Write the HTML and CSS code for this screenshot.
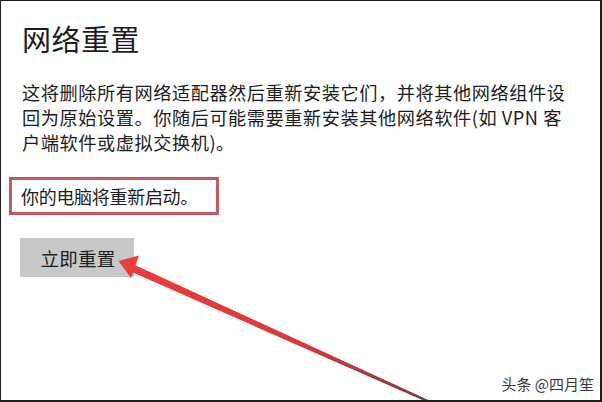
FILE: index.html
```html
<!DOCTYPE html>
<html>
<head>
<meta charset="utf-8">
<link rel="stylesheet" href="styles.css">
</head>
<body>
<div class="frame">
    <h1 class="title">网络重置</h1>
    <p class="desc">这将删除所有网络适配器然后重新安装它们，并将其他网络组件设<br>回为原始设置。你随后可能需要重新安装其他网络软件(如 VPN 客<br>户端软件或虚拟交换机)。</p>
    <div class="notice">你的电脑将重新启动。</div>
    <div class="actions">
        <button class="reset-btn">立即重置</button>
    </div>

    <!-- annotation arrow -->
    <svg class="arrow" width="602" height="402" viewBox="0 0 602 402">
        <defs>
            <linearGradient id="shaft" x1="130" y1="267" x2="432" y2="403" gradientUnits="userSpaceOnUse">
                <stop offset="0" stop-color="#ec3b3b"/>
                <stop offset="0.6" stop-color="#d23a3a"/>
                <stop offset="1" stop-color="#7a3a3a"/>
            </linearGradient>
        </defs>
        <polygon points="128.4,270.6 131.6,263.4 432.6,402 431.4,404" fill="url(#shaft)"/>
        <polygon points="118.5,261 139,255.5 131,278" fill="#ec3b3b"/>
    </svg>

    <div class="watermark">头条 @四月笙</div>
</div>
</body>
</html>
```

FILE: styles.css
```css
body {
    margin: 0;
    background: #fff;
}

.frame {
    position: relative;
    width: 602px;
    height: 402px;
    box-sizing: border-box;
    border: 1px solid #1e1e1e;
    border-right-width: 2px;
    border-bottom-width: 2px;
    padding: 19px 0 0 21px;
    overflow: hidden;
    font-family: "Noto Sans CJK SC", "Noto Sans", sans-serif;
    color: #1c1c1c;
}

.title {
    margin: 0;
    font-size: 29px;
    font-weight: normal;
    line-height: 36px;
    letter-spacing: 0.5px;
}

.desc {
    margin: 24px 0 0 0;
    font-size: 18.2px;
    line-height: 25px;
    letter-spacing: 0.55px;
    white-space: nowrap;
}

.notice {
    display: inline-block;
    margin: 22px 0 0 -13px;
    padding: 0 18px 0 9px;
    border: 3px solid #c65a62;
    font-size: 18px;
    line-height: 32px;
    letter-spacing: -0.3px;
}

.actions {
    margin: 23px 0 0 -2px;
}

.reset-btn {
    width: 114px;
    height: 39px;
    border: none;
    background: #c8c8c8;
    padding: 0 0 0 2px;
    font-family: "Noto Sans CJK SC", "Noto Sans", sans-serif;
    font-size: 18.5px;
    color: #1c1c1c;
    letter-spacing: 0.2px;
}

.arrow {
    position: absolute;
    left: -1px;
    top: -1px;
}

.watermark {
    position: absolute;
    right: 6px;
    bottom: 8px;
    font-size: 15px;
    line-height: 16px;
    color: #3a3a3a;
    text-shadow: 0 0 2px #fff;
}
```
